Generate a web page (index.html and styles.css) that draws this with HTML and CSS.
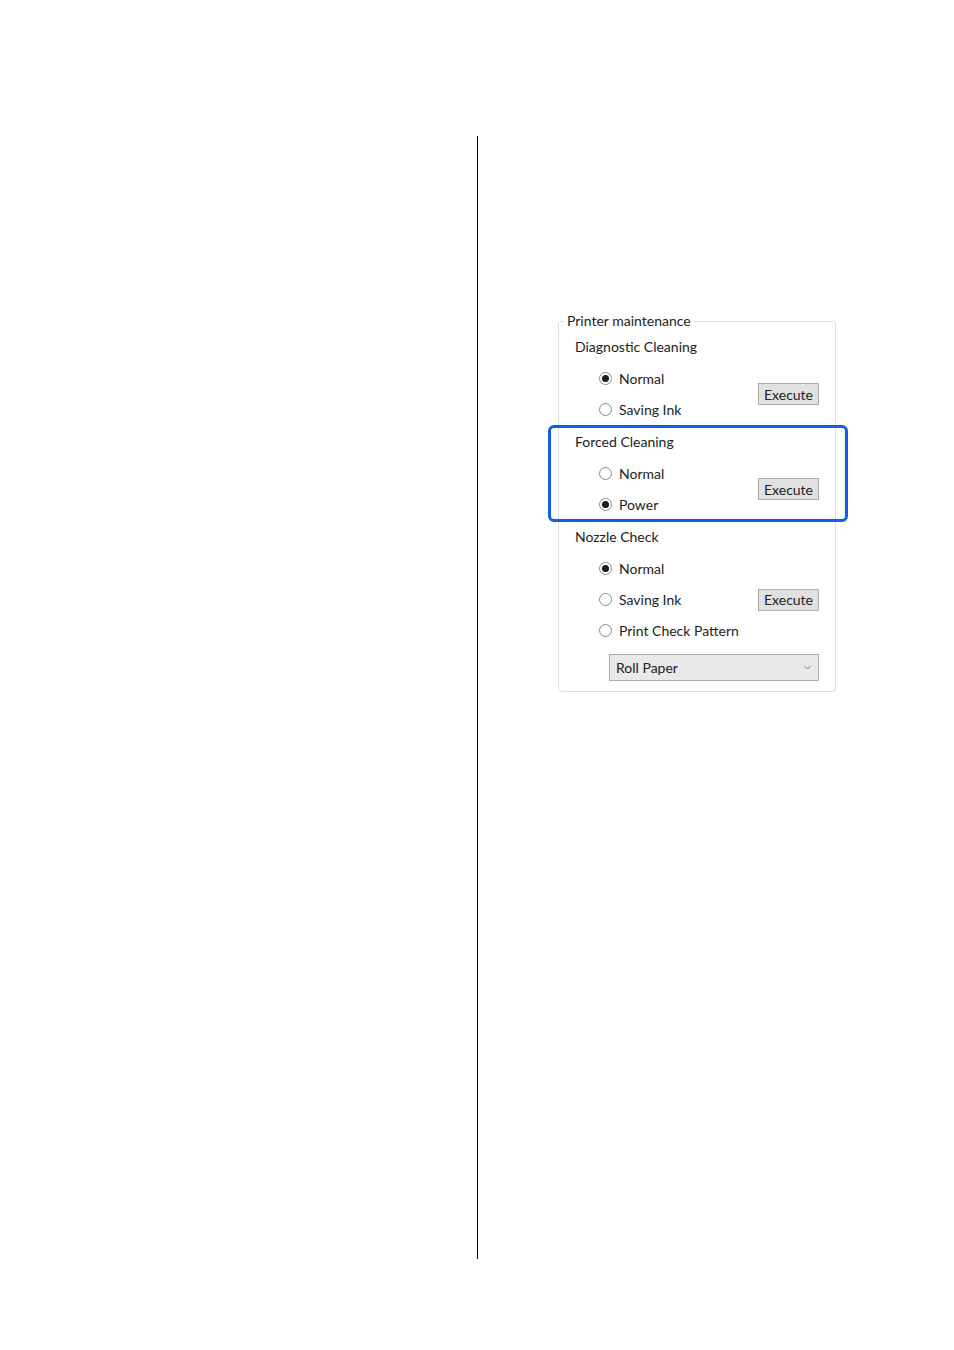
FILE: index.html
```html
<!DOCTYPE html>
<html lang="en">
<head>
  <meta charset="UTF-8">
  <meta name="viewport" content="width=device-width, initial-scale=1.0">
  <title>Printer maintenance</title>
  <link rel="stylesheet" href="styles.css">
</head>
<body>
  <div class="page">
    <div class="left-col"></div>
    <div class="divider"></div>

    <div class="right-col">
      <!-- Printer maintenance group box -->
      <div class="group">
        <span class="group-title">Printer maintenance</span>

        <div class="section">
          <div class="section-title">Diagnostic Cleaning</div>
          <div class="options">
            <label class="radio"><span class="dot checked"></span>Normal</label>
            <label class="radio"><span class="dot"></span>Saving Ink</label>
          </div>
          <button class="exec">Execute</button>
        </div>

        <div class="section highlight">
          <div class="section-title">Forced Cleaning</div>
          <div class="options">
            <label class="radio"><span class="dot"></span>Normal</label>
            <label class="radio"><span class="dot checked"></span>Power</label>
          </div>
          <button class="exec">Execute</button>
        </div>

        <div class="section">
          <div class="section-title">Nozzle Check</div>
          <div class="options">
            <label class="radio"><span class="dot checked"></span>Normal</label>
            <label class="radio"><span class="dot"></span>Saving Ink</label>
            <label class="radio"><span class="dot"></span>Print Check Pattern</label>
          </div>
          <button class="exec">Execute</button>
        </div>

        <div class="select">
          <span>Roll Paper</span>
          <svg class="chevron" width="7" height="5" viewBox="0 0 7 5"><path d="M0.5 1 L3.5 4 L6.5 1" fill="none" stroke="#777" stroke-width="1"/></svg>
        </div>
      </div>
    </div>
  </div>
</body>
</html>
```

FILE: styles.css
```css
body {
  margin: 0;
  background-color: white;
  font-family: 'Lato', 'Open Sans', sans-serif;
  color: #222;
}
.page {
  display: flex;
  padding-top: 136px;
}
.left-col {
  width: 477px;
}
.divider {
  width: 1px;
  height: 1123px;
  background-color: #000;
}
.right-col {
  padding-top: 185px;
  padding-left: 80px;
}
.group {
  position: relative;
  width: 276px;
  border: 1px solid #dde1e6;
  border-radius: 3px;
  padding: 8px 0 10px 0;
  font-size: 14px;
}
.group-title {
  position: absolute;
  top: -11px;
  left: 5px;
  padding: 0 3px;
  background-color: white;
  line-height: 19px;
}
.section {
  position: relative;
  display: grid;
  grid-template-columns: 1fr auto;
  padding-right: 16px;
}
.section-title {
  grid-column: 1 / 3;
  height: 33px;
  line-height: 33px;
  padding-left: 16px;
}
.options {
  display: flex;
  flex-direction: column;
  padding-left: 40px;
}
.radio {
  display: flex;
  align-items: center;
  height: 30px;
  padding-bottom: 1px;
}
.dot {
  width: 11px;
  height: 11px;
  border: 1px solid #8a8a8a;
  border-radius: 50%;
  margin-right: 7px;
  display: flex;
  justify-content: center;
  align-items: center;
}
.dot.checked::after {
  content: "";
  width: 7px;
  height: 7px;
  border-radius: 50%;
  background-color: #1c1c1c;
}
.exec {
  align-self: center;
  width: 61px;
  height: 22px;
  padding: 0;
  background-color: #e1e1e1;
  border: 1px solid #adadad;
  border-radius: 0;
  font-family: inherit;
  font-size: 14px;
  color: #222;
}
/* blue box round Forced Cleaning */
.highlight::after {
  content: "";
  position: absolute;
  top: 0;
  bottom: -2px;
  left: -11px;
  right: -13px;
  border: 3px solid #0b5fe8;
  border-radius: 6px;
}
.select {
  display: flex;
  justify-content: space-between;
  align-items: center;
  width: 195px;
  height: 25px;
  margin: 8px 0 0 50px;
  padding: 0 7px 0 6px;
  background-color: #e9e9e9;
  border: 1px solid #acacac;
}
```
